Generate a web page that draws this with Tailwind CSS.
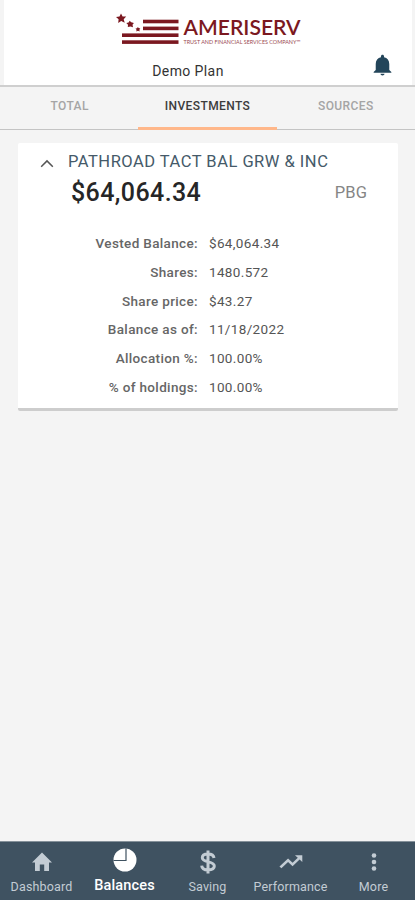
<!DOCTYPE html>
<html lang="en">
<head>
  <meta charset="UTF-8">
  <meta name="viewport" content="width=device-width, initial-scale=1.0">
  <title>Investments</title>
  <script src="https://cdn.jsdelivr.net/npm/@tailwindcss/browser@4"></script>
</head>
<body class="bg-[#f4f4f4] font-['Roboto',sans-serif]">
  <div class="h-[900px] w-[415px] flex flex-col overflow-hidden">

    <!-- Header -->
    <header class="h-[87px] shrink-0 border-b-2 border-[#cfcfcf] pl-1 pr-[3px]">
      <div class="relative h-full bg-white flex flex-col items-center">
        <svg class="mt-[10px] ml-1 h-[40px] w-[190px] shrink-0" viewBox="115 10 190 40" fill="#7b1820">
          <path d="M121 13.500l1.600 3 3.600.1-2.500 2.600 1 3.600-3.500-1.800-3 2 .4-3.700-2.600-2.300 3.500-.6z" />
          <path d="M129.700 20.800l1.500 1.400 2.700.7-1.400 1.800.5 2.500-2.500-.7-2.700.5.2-2.300-1.700-1.700 2.300-.5z" />
          <path d="M137.800 27l.9 1.100 1.600.5-.9 1.200.2 1.600-1.600-.6-1.600.6.1-1.600-1-1.200 1.600-.4z" />
          <rect x="143" y="19.700" width="35.500" height="3.600" />
          <rect x="143" y="26.600" width="35.500" height="3.600" />
          <rect x="122" y="33.400" width="56.500" height="3.600" />
          <rect x="122" y="40.300" width="56.500" height="3.600" />
          <text x="183.500" y="35" font-family="Lato, sans-serif" font-size="21" font-weight="600" textLength="117" lengthAdjust="spacingAndGlyphs">AMERISERV</text>
          <text x="183.500" y="43.700" font-family="Lato, sans-serif" font-size="5.600" textLength="117" lengthAdjust="spacingAndGlyphs" fill="#9a4a50">TRUST AND FINANCIAL SERVICES COMPANY™</text>
        </svg>
        <h1 class="mt-[11px] mr-[40px] text-[14px] leading-5 tracking-[0.4px] text-[#333]">Demo Plan</h1>
        <svg class="absolute left-[366px] top-[53px] h-6 w-[25px]" viewBox="0 0 24 24" preserveAspectRatio="none" fill="#23455a">
          <path d="M12 22.500c1.100 0 1.900-.8 1.900-1.700h-3.800c0 .9.800 1.700 1.900 1.700zM18.500 17v-6c0-3.400-1.900-6-5-6.700V3.200c0-.8-.7-1.500-1.500-1.500s-1.500.7-1.500 1.500v1.100c-3.100.7-5 3.300-5 6.700v6l-2 1.900v.8h17v-.8z" />
        </svg>
      </div>
    </header>

    <!-- Tabs -->
    <div class="h-[43px] shrink-0 grid grid-cols-3 border-b border-[#c4c4c4] text-[12px] font-medium tracking-[0.4px] text-[#a5a5a5] text-center">
      <div class="pt-[10px] pl-px leading-[18px]">TOTAL</div>
      <div class="-mb-px pt-[10px] leading-[18px] border-b-[3px] border-[#ffb78a] text-[#3c3c3c]">INVESTMENTS</div>
      <div class="pt-[10px] leading-[18px]">SOURCES</div>
    </div>

    <!-- Balances -->
    <main class="flex-1 pt-[13px] pl-[18px] pr-[17px]">
      <div class="h-[268px] bg-white border-b-[3px] border-[#cdcdcd] rounded-[2px]">
        <div class="flex items-center pt-2 pl-[22px]">
          <svg class="mt-[3px] size-[14px] mr-[14px]" viewBox="0 0 14 14" fill="none" stroke="#555" stroke-width="1.500">
            <path d="M1.200 9.700L7 3.900l5.800 5.800" />
          </svg>
          <h2 class="text-[16.500px] leading-[22px] tracking-[0.5px] text-[#455a69]">PATHROAD TACT BAL GRW &amp; INC</h2>
        </div>
        <div class="flex items-center justify-between pl-[53px] pr-[31px]">
          <span class="text-[25px] leading-[40px] font-medium tracking-[0.4px] text-[#262626]">$64,064.34</span>
          <span class="text-[16.500px] tracking-[0.1px] text-[#858585]">PBG</span>
        </div>
        <dl class="mt-4 grid grid-cols-[180px_1fr] gap-x-[11px] text-[13.500px] leading-[28.800px] tracking-[0.350px] text-[#555]">
          <dt class="text-right font-medium text-[#666]">Vested Balance:</dt>
          <dd>$64,064.34</dd>
          <dt class="text-right font-medium text-[#666]">Shares:</dt>
          <dd>1480.572</dd>
          <dt class="text-right font-medium text-[#666]">Share price:</dt>
          <dd>$43.27</dd>
          <dt class="text-right font-medium text-[#666]">Balance as of:</dt>
          <dd>11/18/2022</dd>
          <dt class="text-right font-medium text-[#666]">Allocation %:</dt>
          <dd>100.00%</dd>
          <dt class="text-right font-medium text-[#666]">% of holdings:</dt>
          <dd>100.00%</dd>
        </dl>
      </div>
    </main>

    <!-- Bottom nav -->
    <nav class="h-[59px] shrink-0 grid grid-cols-5 bg-[#3f5261] border-t border-[#85919a] text-[12.500px] tracking-[0.150px] text-[#c3ccd4]">
      <a href="#" class="flex flex-col items-center pt-[8px]">
        <svg class="size-6" viewBox="0 0 24 24" fill="currentColor">
          <path d="M9.800 21v-6.500h4.400V21H19v-8.500h3L12 2.500 2 12.500h3V21z" />
        </svg>
        <span class="mt-[4px] leading-[18px]">Dashboard</span>
      </a>
      <a href="#" class="flex flex-col items-center pt-[6px] text-white">
        <svg class="size-6" viewBox="0 0 24 24">
          <circle cx="12" cy="12" r="11.500" fill="currentColor" />
          <path d="M13 .5v12H.5" fill="none" stroke="#3f5261" stroke-width="1.200" />
        </svg>
        <span class="mt-[5px] text-[14.500px] leading-[18px] font-medium">Balances</span>
      </a>
      <a href="#" class="flex flex-col items-center pt-[8px]">
        <svg class="size-6" viewBox="0 0 24 24" fill="none" stroke="currentColor" stroke-width="3">
          <path d="M18 8c-.3-2.600-2.500-4-6-4-3.400 0-5.700 1.400-5.700 3.800 0 5.500 12 2.700 12 8.300 0 2.500-2.500 3.900-6.200 3.900-3.800 0-6.200-1.500-6.400-4.400M12 .6v22.800" />
        </svg>
        <span class="mt-[4px] leading-[18px]">Saving</span>
      </a>
      <a href="#" class="flex flex-col items-center pt-[8px]">
        <svg class="h-6 w-[26px]" viewBox="0.500 0.500 23 23" preserveAspectRatio="none" fill="currentColor">
          <path d="M15.500 5.500l2.500 2.500-4.600 4.600-4-4L1.800 16.300 3.500 18l5.900-5.900 4 4 6.200-6.400L22 12V5.500z" />
        </svg>
        <span class="mt-[4px] leading-[18px]">Performance</span>
      </a>
      <a href="#" class="flex flex-col items-center pt-[8px]">
        <svg class="size-6" viewBox="0 0 24 24" fill="currentColor">
          <circle cx="12" cy="5.500" r="2.300" />
          <circle cx="12" cy="12" r="2.300" />
          <circle cx="12" cy="18.500" r="2.300" />
        </svg>
        <span class="mt-[4px] leading-[18px]">More</span>
      </a>
    </nav>
  </div>
</body>
</html>
